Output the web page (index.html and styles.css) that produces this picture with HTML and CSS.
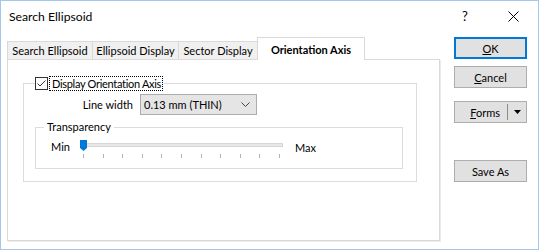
FILE: index.html
```html
<!doctype html>
<html lang="en">
    <head>
        <meta charset="UTF-8">
        <title>Search Ellipsoid</title>
        <link rel="stylesheet" href="styles.css">
    </head>
    <body>
        <div class="window">
            <div class="titlebar">
                <span class="title">Search Ellipsoid</span>
                <span class="help">?</span>
                <span class="close">
                    <svg width="11" height="11" viewBox="0 0 11 11"><path d="M0.5 0.5 L10.5 10.5 M10.5 0.5 L0.5 10.5" stroke="#000" stroke-width="1"/></svg>
                </span>
            </div>
            <div class="main">
                <div class="tabs">
                    <div class="tab-strip">
                        <div class="tab">Search Ellipsoid</div>
                        <div class="tab">Ellipsoid Display</div>
                        <div class="tab">Sector Display</div>
                        <div class="tab active">Orientation Axis</div>
                    </div>
                    <div class="panel">
                        <fieldset class="group outer">
                            <legend class="check-legend">
                                <span class="checkbox">
                                    <svg width="11" height="11" viewBox="0 0 11 11"><path d="M1.5 5.5 L4 8 L9.5 2.5" fill="none" stroke="#333" stroke-width="1"/></svg>
                                </span>
                                <span class="focus">Display Orientation Axis</span>
                            </legend>
                            <div class="field-row">
                                <span class="field-label">Line width</span>
                                <div class="combo">
                                    <span>0.13 mm (THIN)</span>
                                    <svg width="9" height="5" viewBox="0 0 9 5"><path d="M0.5 0.5 L4.5 4.5 L8.5 0.5" fill="none" stroke="#444" stroke-width="1"/></svg>
                                </div>
                            </div>
                            <fieldset class="group inner">
                                <legend>Transparency</legend>
                                <div class="slider-row">
                                    <span class="min">Min</span>
                                    <div class="slider">
                                        <div class="track"></div>
                                        <svg class="thumb" width="7" height="11" viewBox="0 0 7 11"><path d="M0 0 H7 V8 L3.5 11 L0 8 Z" fill="#0078d7"/></svg>
                                        <div class="ticks">
                                            <i></i><i></i><i></i><i></i><i></i><i></i><i></i><i></i><i></i><i></i><i></i>
                                        </div>
                                    </div>
                                    <span class="max">Max</span>
                                </div>
                            </fieldset>
                        </fieldset>
                    </div>
                </div>
                <div class="buttons">
                    <button class="btn default"><u>O</u>K</button>
                    <button class="btn cancel"><u>C</u>ancel</button>
                    <button class="btn forms">
                        <span class="forms-label"><u>F</u>orms</span>
                        <span class="split"></span>
                        <svg width="7" height="4" viewBox="0 0 7 4"><path d="M0 0 H7 L3.5 4 Z" fill="#000"/></svg>
                    </button>
                    <button class="btn save">Save As</button>
                </div>
            </div>
        </div>
    </body>
</html>
```

FILE: styles.css
```css
* {
    box-sizing: border-box;
}
html {
    font-family: "Lato", "Noto Sans", sans-serif;
    font-size: 11px;
    color: #000;
    background-color: #fff;
}
body {
    margin: 0;
}
.window {
    width: 539px;
    height: 250px;
    border: 1px solid #a3c6ea;
    background-color: #fff;
}
.titlebar {
    height: 30px;
    display: flex;
    align-items: center;
}
.title {
    flex: 1;
    padding-left: 8px;
    font-size: 12.2px;
}
.help {
    width: 10px;
    font-size: 13px;
    margin-right: 36px;
}
.close {
    display: flex;
    margin-right: 19px;
    margin-top: 1px;
}
.main {
    display: flex;
    padding: 6px 0 0 6px;
}
.tabs {
    width: 433px;
}
.tab-strip {
    display: flex;
    align-items: flex-end;
    height: 23px;
    margin-bottom: -1px;
    position: relative;
    z-index: 1;
}
.tab {
    height: 18px;
    margin-bottom: 1px;
    display: flex;
    align-items: center;
    justify-content: center;
    background-color: #f0f0f0;
    border: 1px solid #d9d9d9;
    border-bottom: none;
    margin-left: -1px;
}
.tab:nth-child(1) {
    width: 86px;
    margin-left: 0;
}
.tab:nth-child(2) {
    width: 87px;
}
.tab:nth-child(3) {
    width: 80px;
}
.tab.active {
    width: 108px;
    height: 23px;
    margin-bottom: 0;
    font-weight: 700;
    background-color: #fff;
}
.panel {
    height: 182px;
    border: 1px solid #d9d9d9;
    box-shadow: 1px 1px 0 #ebebeb;
    padding: 0 22px 0 15px;
}
.group {
    margin: 0;
    padding: 0;
    border: 1px solid #dcdcdc;
    min-width: 0;
}
.group.outer {
    margin-top: 16px;
}
.check-legend {
    margin-left: 11px;
    padding: 0 2px 0 0;
    display: flex;
    align-items: center;
    height: 14px;
}
.checkbox {
    width: 13px;
    height: 13px;
    border: 1px solid #333;
    display: flex;
}
.focus {
    margin-left: 2px;
    padding: 0 1px 0 2px;
    outline: 1px dotted #000;
    line-height: 13px;
    letter-spacing: -0.3px;
}
.field-row {
    display: flex;
    align-items: center;
    margin-top: 4px;
}
.field-label {
    width: 109px;
    text-align: right;
}
.combo {
    width: 117px;
    height: 21px;
    margin-left: 7px;
    border: 1px solid #acacac;
    background-color: #e5e5e5;
    display: flex;
    align-items: center;
    justify-content: space-between;
    padding: 0 6px 0 3px;
}
.group.inner {
    margin: 5px 13px 12px 11px;
    padding-bottom: 10px;
}
.group.inner legend {
    margin-left: 8px;
    padding: 0 3px;
    line-height: 14px;
}
.slider-row {
    display: flex;
    align-items: flex-start;
    padding-left: 15px;
    margin-top: 6px;
}
.min {
    width: 29px;
    line-height: 14px;
}
.slider {
    position: relative;
    width: 204px;
}
.track {
    margin: 3px 0 0 1px;
    width: 202px;
    height: 4px;
    border: 1px solid #d6d6d6;
    background-color: #e7e7e7;
}
.thumb {
    position: absolute;
    left: 0;
    top: 0;
}
.ticks {
    display: flex;
    justify-content: space-between;
    margin: 7px 4px 0 3px;
}
.ticks i {
    width: 1px;
    height: 4px;
    background-color: #b4b4b4;
}
.max {
    margin: 1px 0 0 11px;
    line-height: 14px;
}
.buttons {
    margin-left: 14px;
    display: flex;
    flex-direction: column;
    width: 73px;
}
.btn {
    width: 73px;
    height: 22px;
    padding: 0;
    border: 1px solid #adadad;
    background-color: #e1e1e1;
    font-family: inherit;
    font-size: 11px;
    color: #000;
}
.btn.default {
    border: 2px solid #0078d7;
}
.btn.cancel {
    margin-top: 7px;
}
.btn.forms {
    margin-top: 13px;
    display: flex;
    align-items: center;
    justify-content: flex-end;
    padding-right: 5px;
}
.split {
    width: 1px;
    height: 16px;
    background-color: #8a8a8a;
    margin: 0 6px 0 7px;
}
.btn.save {
    margin-top: 37px;
}
```
